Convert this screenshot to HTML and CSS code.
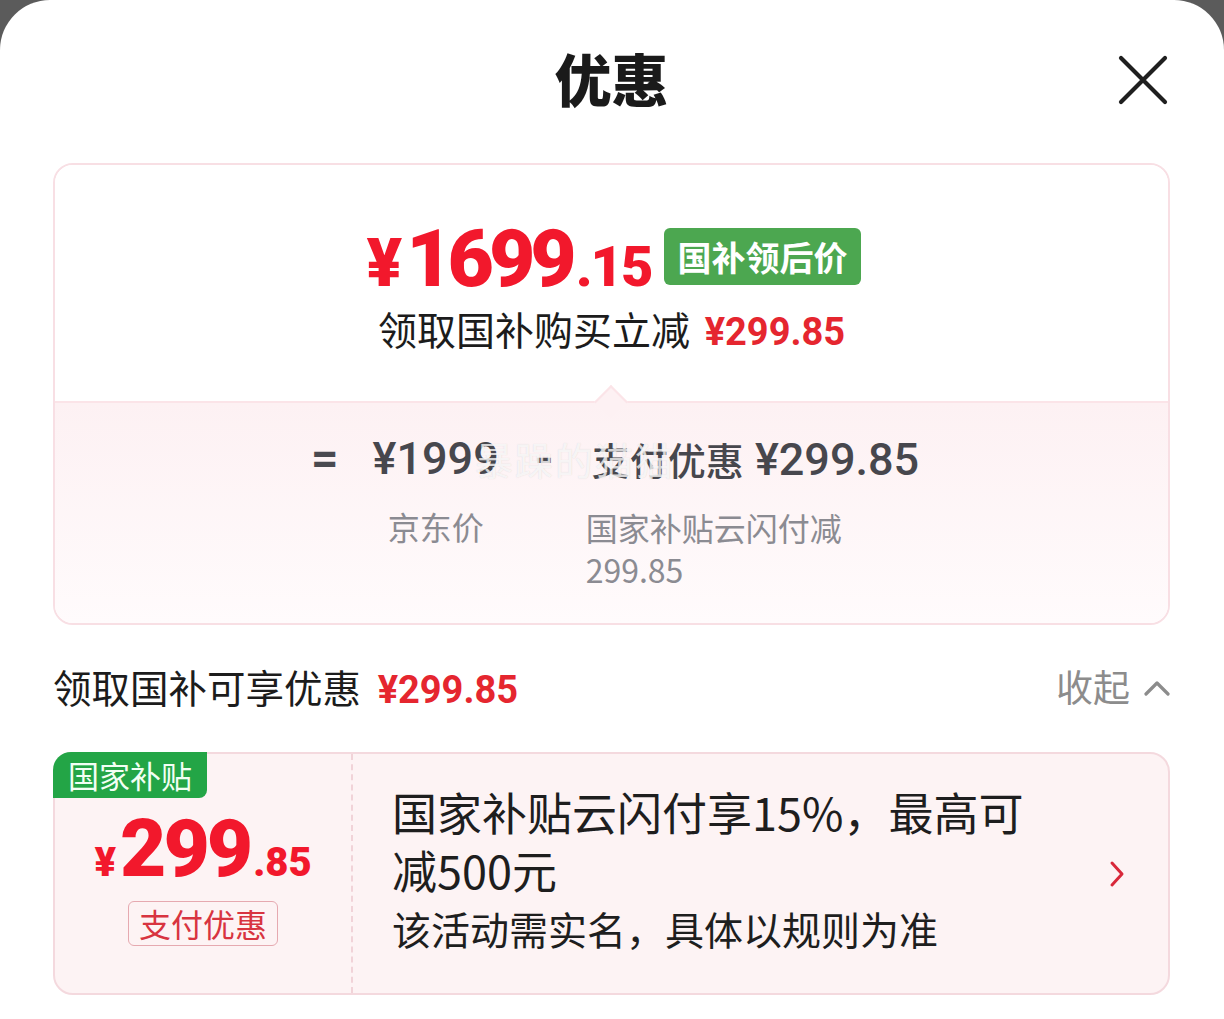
FILE: index.html
```html
<!DOCTYPE html>
<html lang="zh-CN">
<head>
<meta charset="utf-8">
<title>优惠</title>
<link rel="stylesheet" href="styles.css">
</head>
<body>
<div class="sheet">
  <header class="head">
    <span></span>
    <h1 class="title">优惠</h1>
    <button class="close" aria-label="关闭">
      <svg width="50" height="50" viewBox="0 0 50 50"><path d="M3 3 L47 47 M47 3 L3 47" stroke="#1f1f1f" stroke-width="4.2" stroke-linecap="round" fill="none"/></svg>
    </button>
  </header>

  <section class="summary">
    <div class="summary-top">
      <div class="price-row">
        <span class="big-price"><span class="yen">¥</span><span class="int">1699</span><span class="dec">.15</span></span>
        <span class="green-badge">国补领后价</span>
      </div>
      <div class="sub-line">领取国补购买立减 <span class="sub-price">¥299.85</span></div>
    </div>
    <div class="summary-bottom">
      <span class="notch"></span>
      <div class="formula">
        <span class="op eq">=</span>
        <div class="term term-a">
          <span class="val">¥1999</span>
          <span class="lbl">京东价</span>
        </div>
        <span class="op minus">-</span>
        <div class="term term-b">
          <span class="val"><span class="cjk">支付优惠</span> ¥299.85</span>
          <span class="lbl">国家补贴云闪付减<br>299.85</span>
        </div>
      </div>
      <span class="watermark">暴躁的猫猫</span>
    </div>
  </section>

  <div class="section-head">
    <div class="sh-left">领取国补可享优惠 <span class="sh-price">¥299.85</span></div>
    <div class="sh-right">收起
      <svg width="26" height="16" viewBox="0 0 26 16"><path d="M2 14 L13 3 L24 14" stroke="#8c8c8c" stroke-width="3.2" fill="none" stroke-linecap="round" stroke-linejoin="round"/></svg>
    </div>
  </div>

  <div class="coupon">
    <span class="tag">国家补贴</span>
    <div class="coupon-left">
      <div class="c-price"><span class="c-yen">¥</span><span class="c-int">299</span><span class="c-dec">.85</span></div>
      <span class="c-kind">支付优惠</span>
    </div>
    <div class="coupon-right">
      <div class="c-text">
        <p class="c-title">国家补贴云闪付享15%，最高可<br>减500元</p>
        <p class="c-desc">该活动需实名，具体以规则为准</p>
      </div>
      <svg class="c-arrow" width="18" height="28" viewBox="0 0 18 28"><path d="M4 3 L14 14 L4 25" stroke="#d8283a" stroke-width="3" fill="none" stroke-linecap="round" stroke-linejoin="round"/></svg>
    </div>
  </div>
</div>
</body>
</html>
```

FILE: styles.css
```css
* { box-sizing: border-box; }
html, body {
  margin: 0;
  padding: 0;
  background: #5b5b5b;
}
body {
  font-family: "Noto Sans CJK SC", "Noto Sans", sans-serif;
  color: #1b1b1b;
}
.sheet {
  width: 1224px;
  height: 1019px;
  background: #ffffff;
  border-radius: 50px 50px 0 0;
  padding: 0 54px 0 53px;
  overflow: hidden;
}
.head {
  height: 163px;
  display: grid;
  grid-template-columns: 1fr auto 1fr;
  align-items: center;
}
.title {
  margin: 0 0 8px;
  font-size: 57px;
  font-weight: 900;
  line-height: 1;
  color: #1a1a1a;
}
.close {
  justify-self: end;
  margin: 0 2px 4px 0;
  background: none;
  border: 0;
  padding: 0;
  width: 50px;
  height: 50px;
  display: flex;
}

/* summary card */
.summary {
  border: 2px solid #f8dfe4;
  border-radius: 20px;
  overflow: hidden;
}
.summary-top {
  height: 236px;
  padding-top: 62px;
  display: flex;
  flex-direction: column;
  align-items: center;
  background: #ffffff;
}
.price-row {
  display: flex;
  align-items: center;
  height: 58px;
  gap: 12px;
  padding-left: 4px;
}
.big-price {
  font-family: Roboto, "Noto Sans", sans-serif;
  font-weight: 900;
  color: #f2182c;
  display: flex;
  align-items: baseline;
  line-height: 1;
  margin-top: 6px;
}
.big-price .yen { font-size: 66px; margin-right: 4px; }
.big-price .int { font-size: 80px; letter-spacing: -5px; }
.big-price .dec { font-size: 56px; letter-spacing: -2px; margin-left: 4px; }
.green-badge {
  background: #4ca750;
  color: #ffffff;
  font-size: 34px;
  font-weight: 700;
  height: 57px;
  line-height: 57px;
  padding: 0 13px 0 14px;
  border-radius: 6px;
}
.sub-line {
  margin-top: 20px;
  font-size: 39px;
  line-height: 46px;
  color: #1c1c1c;
}
.sub-price {
  font-family: Roboto, "Noto Sans", sans-serif;
  font-weight: 700;
  font-size: 38px;
  color: #e5262f;
  margin-left: 6px;
}
.summary-bottom {
  position: relative;
  height: 222px;
  border-top: 2px solid #fbe4e8;
  background: linear-gradient(#fdf1f3, #fffbfc);
}
.notch {
  position: absolute;
  left: 544px;
  top: -13px;
  width: 24px;
  height: 24px;
  background: #fdf1f3;
  border-top: 2px solid #fbe4e8;
  border-left: 2px solid #fbe4e8;
  transform: rotate(45deg);
}
.formula {
  display: flex;
  justify-content: flex-start;
  align-items: flex-start;
  padding-top: 31px;
  padding-left: 256px;
}
.op {
  font-family: Roboto, "Noto Sans", sans-serif;
  font-size: 48px;
  font-weight: 700;
  line-height: 50px;
  color: #4a4a50;
}
.eq { margin-right: 34px; }
.minus { margin: 0 38px 0 36px; }
.term {
  display: flex;
  flex-direction: column;
}
.term-a { align-items: center; }
.term-b { align-items: flex-start; }
.val {
  font-family: Roboto, "Noto Sans CJK SC", sans-serif;
  font-size: 45px;
  font-weight: 500;
  line-height: 50px;
  color: #47474d;
  white-space: nowrap;
}
.val .cjk {
  font-family: "Noto Sans CJK SC", sans-serif;
  font-size: 38px;
}
.lbl {
  margin-top: 21px;
  font-size: 32px;
  line-height: 42px;
  color: #8b8b92;
}
.term-b .lbl { margin-left: -6px; }
.watermark {
  position: absolute;
  left: 420px;
  top: 31px;
  font-size: 38px;
  line-height: 50px;
  color: rgba(255, 255, 255, 0.75);
  text-shadow: 0 0 1px rgba(120, 120, 120, 0.25);
  letter-spacing: 2px;
  pointer-events: none;
}

/* section header */
.section-head {
  height: 127px;
  display: flex;
  align-items: center;
  justify-content: space-between;
  padding-bottom: 6px;
}
.sh-left {
  font-size: 38.5px;
  color: #1c1c1c;
}
.sh-price {
  font-family: Roboto, "Noto Sans", sans-serif;
  font-weight: 700;
  font-size: 38px;
  color: #e5262f;
  margin-left: 8px;
}
.sh-right {
  display: flex;
  align-items: center;
  gap: 14px;
  font-size: 37px;
  color: #8c8c8c;
}
.sh-right svg { margin-top: 4px; }

/* coupon */
.coupon {
  position: relative;
  height: 243px;
  display: flex;
  background: #fdf3f4;
  border: 2px solid #f4d9de;
  border-radius: 20px;
}
.tag {
  position: absolute;
  left: -2px;
  top: -2px;
  height: 46px;
  padding: 0 15px 0 15px;
  background: #23a546;
  color: #f2fff4;
  font-size: 31px;
  line-height: 46px;
  border-radius: 18px 0 8px 0;
}
.coupon-left {
  width: 298px;
  flex: none;
  border-right: 2px dashed #f1d3d8;
  display: flex;
  flex-direction: column;
  align-items: center;
  padding-top: 55px;
}
.c-price {
  font-family: Roboto, "Noto Sans", sans-serif;
  font-weight: 900;
  color: #f2182c;
  display: flex;
  align-items: baseline;
  line-height: 1;
  height: 80px;
}
.c-yen { font-size: 40px; margin-right: 4px; }
.c-int { font-size: 80px; letter-spacing: -3px; }
.c-dec { font-size: 40px; margin-left: 3px; }
.c-kind {
  margin-top: 12px;
  border: 1.5px solid #e6a9b0;
  border-radius: 6px;
  color: #d83440;
  font-size: 32px;
  line-height: 43px;
  padding: 0 10px;
}
.coupon-right {
  flex: 1;
  display: flex;
  align-items: center;
  justify-content: space-between;
  padding: 0 42px 0 39px;
}
.c-text { margin-top: -10px; }
.c-text p { margin: 0; }
.c-title {
  font-size: 45px;
  line-height: 58px;
  color: #1e1e1e;
}
.c-desc {
  font-size: 39px;
  line-height: 54px;
  color: #1e1e1e;
  margin-top: 2px !important;
}
.c-arrow { margin-top: 0; }
```
